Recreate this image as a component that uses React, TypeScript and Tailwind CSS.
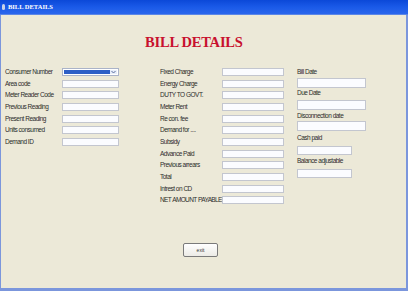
import React from "react";

const sans = { fontFamily: '"Liberation Sans", Arial, sans-serif' };

function Label({ children, w, tight }: { children: React.ReactNode; w: string; tight?: boolean }) {
  return (
    <div
      className={`${w} text-[6.5px] leading-[8px] ${tight ? "text-[6.2px] tracking-[-0.65px] [word-spacing:0.5px]" : "tracking-[-0.5px]"} text-[#2c2c2c] whitespace-nowrap`}
    >
      {children}
    </div>
  );
}

function Box({ w, h = "h-[8px]" }: { w: string; h?: string }) {
  return <div className={`${w} ${h} border border-[#c3c6cf] bg-[#fbfcff]`} />;
}

export default function App() {
  const left = [
    "Area code",
    "Meter Reader Code",
    "Previous Reading",
    "Present Reading",
    "Units consumed",
    "Demand ID",
  ];
  const mid = [
    "Fixed Charge",
    "Energy Charge",
    "DUTY TO GOVT.",
    "Meter Rent",
    "Re con. fee",
    "Demand for ....",
    "Subsidy",
    "Advance Paid",
    "Previous arrears",
    "Total",
    "Intrest on CD",
    "NET AMOUNT PAYABLE",
  ];
  return (
    <div className="w-[408px] h-[291px] flex flex-col overflow-hidden" style={sans}>
      {/* title bar */}
      <div className="h-[15px] flex items-center gap-[3px] pl-[2px] bg-gradient-to-b from-[#0b48d8] via-[#1a5ae8] to-[#2a66ec] border-b border-[#5b86e6]">
        <div className="w-[3px] h-[6px] rounded-full bg-[#c9d3e8]" />
        <span
          className="text-[6.5px] leading-[8px] font-bold text-white"
          style={{ fontFamily: '"Liberation Serif", "Times New Roman", serif' }}
        >
          BILL DETAILS
        </span>
      </div>
      {/* body */}
      <div className="flex-1 flex flex-col bg-[#ece9d8] border-r-2 border-b-[3px] border-l border-[#7b96dc]">
        <div className="pt-[20px] pl-[144px]">
          <h1
            className="text-[14.5px] leading-[15px] font-bold text-[#c8102e] tracking-[-0.2px]"
            style={{ fontFamily: '"Liberation Serif", "Times New Roman", serif' }}
          >
            BILL DETAILS
          </h1>
        </div>
        <div className="flex pt-[18px] pl-[4px]">
          {/* left column */}
          <div className="flex flex-col gap-[3.67px]">
            <div className="flex items-center h-[8px]">
              <Label w="w-[57px]">Consumer Number</Label>
              <div className="w-[57px] h-[8px] border border-[#aab3c8] bg-white flex items-stretch p-[1px]">
                <div className="flex-1 bg-[#2d5fc6]" />
                <div className="w-[7px] flex items-center justify-center bg-[#e8eefa]">
                  <svg width="5" height="4" viewBox="0 0 5 4">
                    <path d="M0.5 1 L2.5 3 L4.5 1" stroke="#5a6f9e" strokeWidth="1" fill="none" />
                  </svg>
                </div>
              </div>
            </div>
            {left.map((l) => (
              <div key={l} className="flex items-center h-[8px]">
                <Label w="w-[57px]">{l}</Label>
                <Box w="w-[57px]" />
              </div>
            ))}
          </div>
          {/* middle column */}
          <div className="flex flex-col gap-[3.67px] ml-[41px]">
            {mid.map((l) => (
              <div key={l} className="flex items-center h-[8px]">
                <Label w="w-[62px]" tight={l === "NET AMOUNT PAYABLE"}>{l}</Label>
                <Box w="w-[62px]" />
              </div>
            ))}
          </div>
          {/* right column */}
          <div className="flex flex-col ml-[13px]">
            <Label w="w-[70px]">Bill Date</Label>
            <div className="mt-[2px]">
              <Box w="w-[69px]" h="h-[10px]" />
            </div>
            <div className="mt-[1px]">
              <Label w="w-[70px]">Due Date</Label>
            </div>
            <div className="mt-[3px]">
              <Box w="w-[69px]" h="h-[10px]" />
            </div>
            <div className="mt-[2px]">
              <Label w="w-[70px]">Disconnection date</Label>
            </div>
            <div className="mt-[1px]">
              <Box w="w-[69px]" h="h-[10px]" />
            </div>
            <div className="mt-[3px]">
              <Label w="w-[70px]">Cash paid</Label>
            </div>
            <div className="mt-[4px]">
              <Box w="w-[55px]" h="h-[9px]" />
            </div>
            <div className="mt-[2px]">
              <Label w="w-[70px]">Balance adjustable</Label>
            </div>
            <div className="mt-[4px]">
              <Box w="w-[55px]" h="h-[9px]" />
            </div>
          </div>
        </div>
        <div className="pl-[182px] mt-[39px]">
          <button className="w-[35px] h-[14px] rounded-[2px] border border-[#7a7a7a] bg-gradient-to-b from-white to-[#ecebe6] flex items-center justify-center text-[5px] leading-[6px] text-[#333]">
            exit
          </button>
        </div>
      </div>
    </div>
  );
}
